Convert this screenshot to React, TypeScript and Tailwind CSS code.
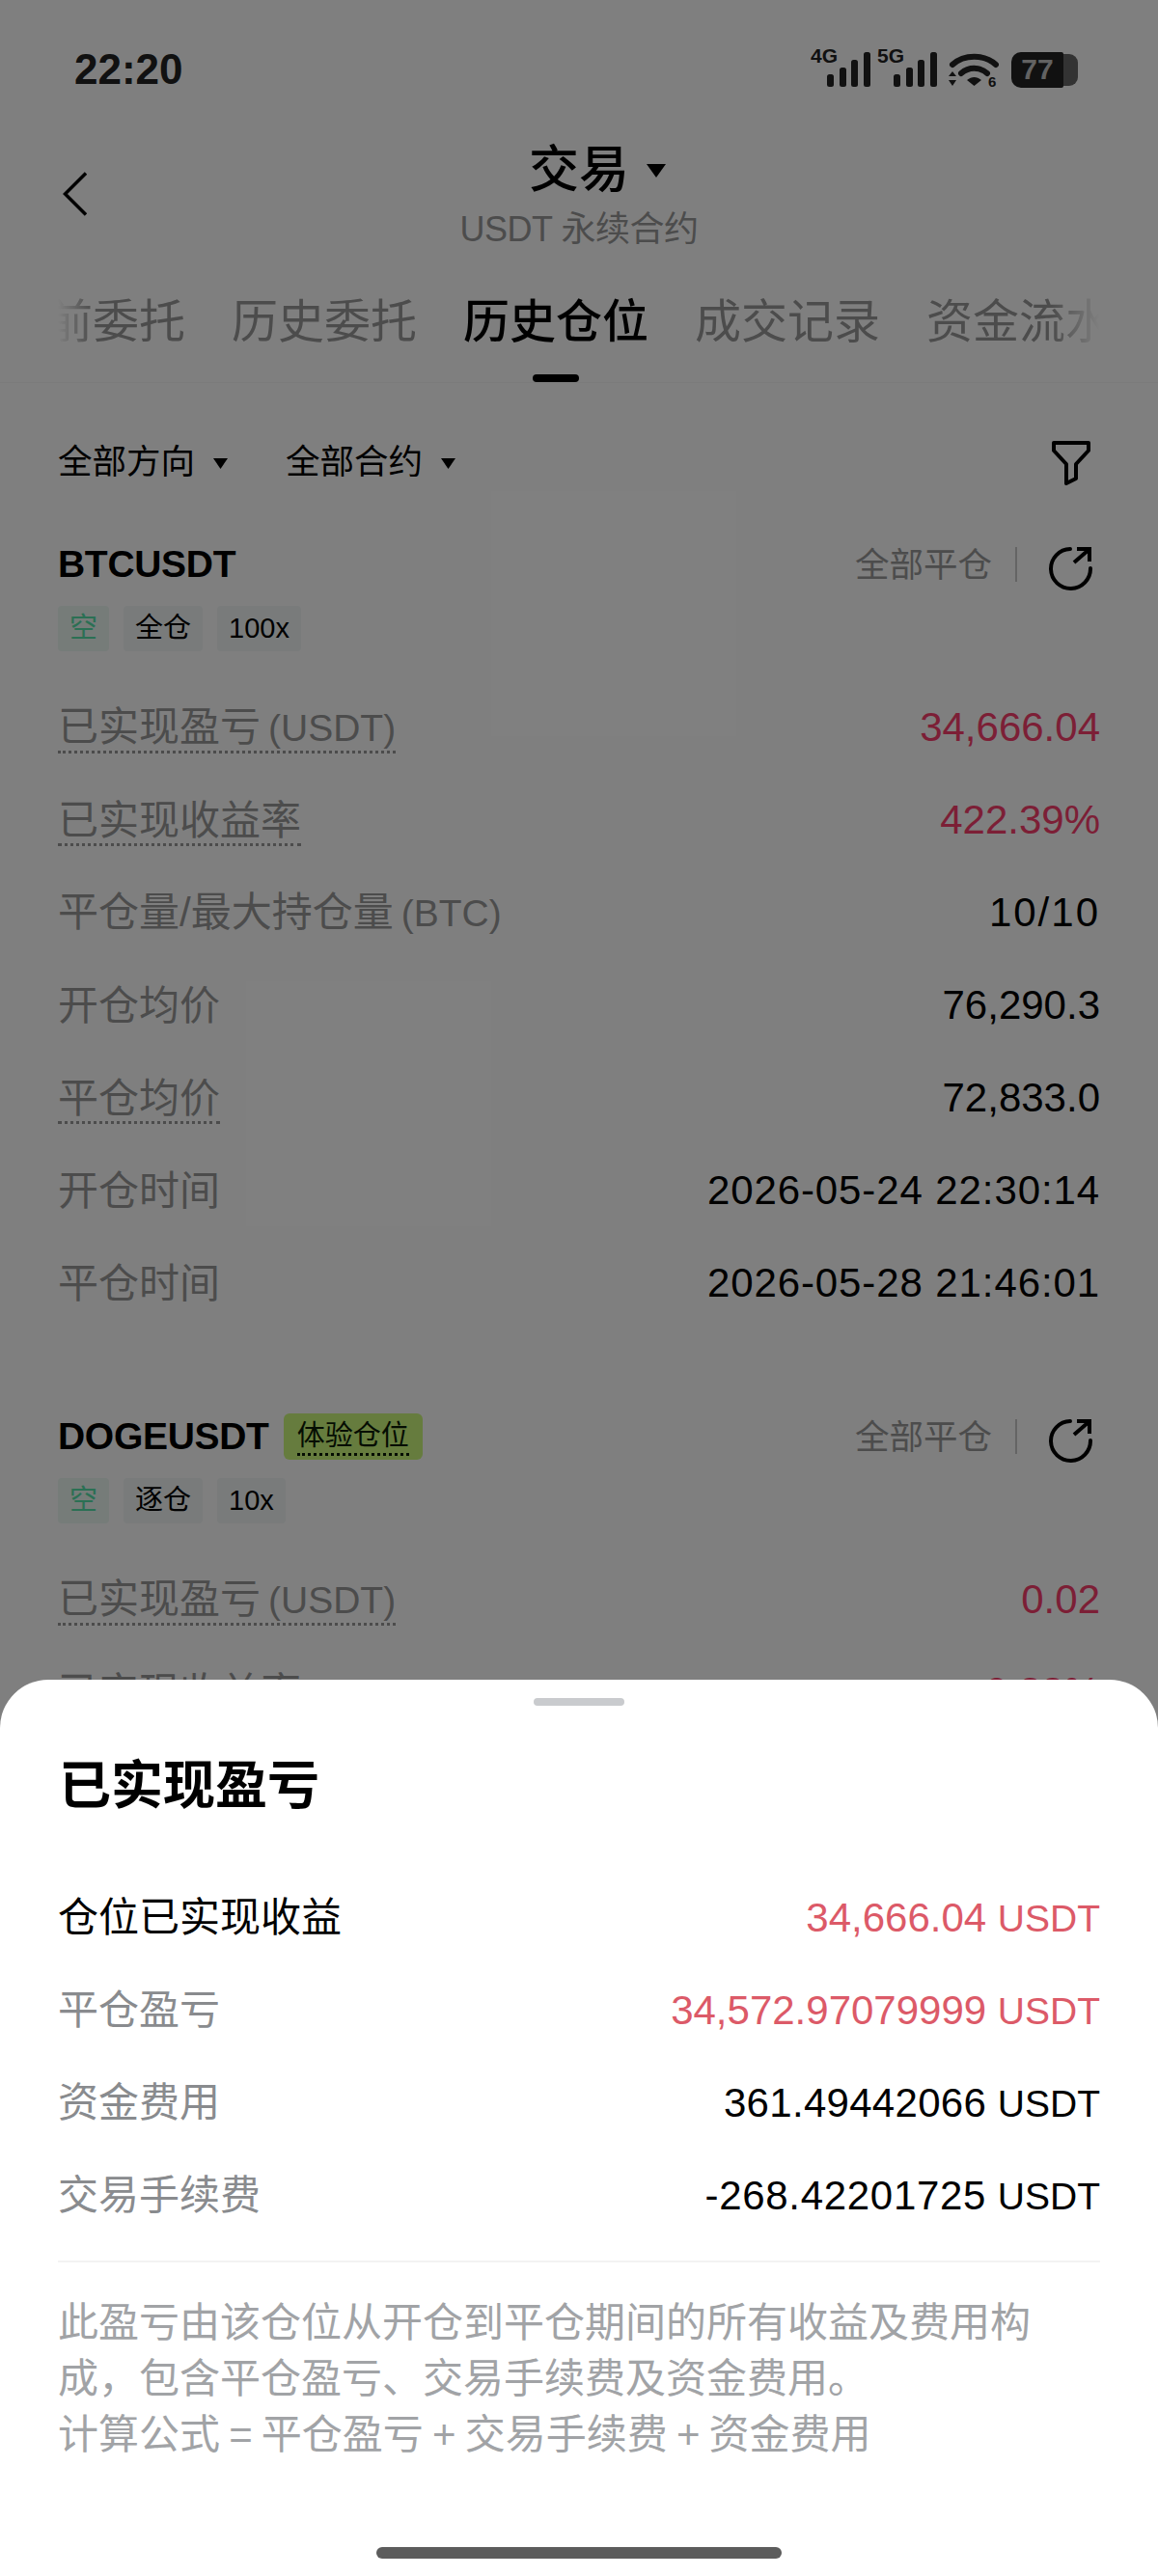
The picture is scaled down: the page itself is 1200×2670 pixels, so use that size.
const font = "font-['Liberation_Sans','Noto_Sans_CJK_SC',sans-serif]"

const positions = [
  {
    symbol: 'BTCUSDT',
    marginMode: '全仓',
    leverage: '100x',
    rows: [
      { label: '已实现盈亏', suffix: '(USDT)', value: '34,666.04', dotted: true, red: true },
      { label: '已实现收益率', value: '422.39%', dotted: true, red: true },
      { label: '平仓量/最大持仓量', suffix: '(BTC)', value: '10/10', wide: 'tracking-[2px]' },
      { label: '开仓均价', value: '76,290.3' },
      { label: '平仓均价', value: '72,833.0', dotted: true },
      { label: '开仓时间', value: '2026-05-24 22:30:14', wide: 'tracking-[0.9px]' },
      { label: '平仓时间', value: '2026-05-28 21:46:01', wide: 'tracking-[0.9px]' },
    ],
  },
  {
    symbol: 'DOGEUSDT',
    trial: true,
    marginMode: '逐仓',
    leverage: '10x',
    rows: [
      { label: '已实现盈亏', suffix: '(USDT)', value: '0.02', dotted: true, red: true },
      { label: '已实现收益率', value: '0.33%', dotted: true, red: true },
    ],
  },
]

const Caret = ({ className }: { className: string }) => (
  <svg viewBox="0 0 16 11" preserveAspectRatio="none" className={className}>
    <path d="M0 0h16L8 11z" fill="#000" />
  </svg>
)

const SignalIcon = ({ label }: { label: string }) => (
  <svg viewBox="0 -8 62 48" className="mb-[12px] h-[48px] w-[62px]">
    <text x="0" y="15" fontSize="21" fontWeight="700" fill="#222" fontFamily="Liberation Sans">
      {label}
    </text>
    <rect x="17" y="27" width="7" height="13" rx="2.500" fill="#222" />
    <rect x="30" y="20" width="7" height="20" rx="2.500" fill="#222" />
    <rect x="42" y="12" width="7" height="28" rx="2.500" fill="#222" />
    <rect x="55" y="4" width="7" height="36" rx="2.500" fill="#222" />
  </svg>
)

const StatusBar = () => (
  <div className="flex h-[144px] items-center justify-between pl-[77px] pr-[83px]">
    <span className="text-[44px] font-bold text-[#222]">22:20</span>
    <div className="flex items-center">
      <SignalIcon label="4G" />
      <div className="ml-[7px] flex">
        <SignalIcon label="5G" />
      </div>
      <svg viewBox="0 0 52 36" className="ml-[12px] mt-[2px] h-[36px] w-[52px]">
        <path d="M4 12C16 1 37 1 49 12" fill="none" stroke="#222" strokeWidth="6" strokeLinecap="round" />
        <path d="M13 21C21 14 32 14 40 21" fill="none" stroke="#222" strokeWidth="6" strokeLinecap="round" />
        <path d="M19 28c5-4 10-4 15 0l-7.500 6z" fill="#222" />
        <path d="M4 19l4 5H0zM0 28h8l-4 6z" fill="#222" />
        <text x="41" y="35" fontSize="15" fontWeight="700" fill="#222" fontFamily="Liberation Sans">
          6
        </text>
      </svg>
      <div className="ml-[13px] flex items-center">
        <div className="flex h-[37px] w-[54px] items-center justify-center rounded-l-[10px] rounded-r-[2px] bg-[#222] text-[30px] font-bold leading-none text-[#c4c4c4]">
          77
        </div>
        <div className="h-[33px] w-[15px] rounded-r-[9px] bg-[#666]" />
      </div>
    </div>
  </div>
)

const Header = () => (
  <div className="grid h-[160px] grid-cols-[1fr_auto_1fr]">
    <div className="pl-[65px] pt-[34px]">
      <svg viewBox="0 0 25 46" className="h-[46px] w-[25px]">
        <path d="M24 1.500 2.500 23 24 44.500" fill="none" stroke="#000" strokeWidth="3.500" />
      </svg>
    </div>
    <div className="flex flex-col items-center">
      <div className="flex items-center">
        <span className="ml-[38px] text-[52px] font-medium leading-[64px] text-black">交易</span>
        <Caret className="ml-[18px] mt-[2px] h-[14px] w-[20px]" />
      </div>
      <span className="mt-[8px] text-[36px] leading-[44px] tracking-[-0.5px] text-[#999]">USDT 永续合约</span>
    </div>
    <div />
  </div>
)

const Tabs = () => (
  <div className="border-b-[1px] border-[#f6f6f6]">
    <div className="ml-[60px] h-[92px] w-[1080px] overflow-hidden [mask-image:linear-gradient(90deg,transparent,#000_36px,#000_1030px,transparent)]">
      <div className="ml-[-60px] flex w-max gap-[48px] text-[48px] leading-[60px] text-[#999]">
        <span>当前委托</span>
        <span>历史委托</span>
        <span className="relative font-medium text-black">
          历史仓位
          <span className="absolute bottom-[-32px] left-[72px] h-[8px] w-[48px] rounded-[4px] bg-black" />
        </span>
        <span>成交记录</span>
        <span>资金流水</span>
      </div>
    </div>
  </div>
)

const Filters = () => (
  <div className="flex h-[100px] items-center px-[60px] pt-[66px] text-[35.5px] text-black">
    <span>全部方向</span>
    <Caret className="ml-[19px] h-[11px] w-[15px]" />
    <span className="ml-[60px]">全部合约</span>
    <Caret className="ml-[19px] h-[11px] w-[15px]" />
    <svg viewBox="0 0 40 46" className="ml-auto mr-[10px] h-[46px] w-[40px]">
      <path d="M2 2h36v8L25 24v15l-10 5V24L2 10z" fill="none" stroke="#000" strokeWidth="4" strokeLinejoin="round" />
    </svg>
  </div>
)

const Tag = ({ children, green }: { children: string; green?: boolean }) => (
  <span
    className={`flex h-[47px] items-center rounded-[4px] px-[12px] text-[29px] ${
      green ? 'bg-[#ecf8f3] text-[#56e0a8]' : 'bg-[#f2f7f7] text-black'
    }`}
  >
    {children}
  </span>
)

type RowProps = { label: string; suffix?: string; value: string; dotted?: boolean; red?: boolean; wide?: string }

const Row = ({ label, suffix, value, dotted, red, wide }: RowProps) => (
  <div className="flex h-[96px] items-center justify-between text-[42px]">
    <span
      className={`pt-[6px] leading-[46px] text-[#999] ${dotted ? 'border-b-[3px] border-dotted border-[#999]' : 'border-b-[3px] border-transparent'}`}
    >
      {label}
      {suffix && <span className="ml-[8px] text-[39px]">{suffix}</span>}
    </span>
    <span className={`${red ? 'text-[#f83e6c]' : 'text-black'} ${wide ?? ''}`}>{value}</span>
  </div>
)

const PositionCard = ({ position }: { position: (typeof positions)[number] }) => (
  <div className="px-[60px] pb-[88px]">
    <div className="flex h-[48px] items-center">
      <span className="text-[39px] font-bold tracking-[-0.3px] text-black">{position.symbol}</span>
      {position.trial && (
        <span className="ml-[15px] flex h-[48px] items-center rounded-[6px] bg-[#cdf87c] px-[14px] text-[29px] text-[#0b1a05]">
          <span className="border-b-[3px] border-dotted border-[#0b1a05] leading-[36px]">体验仓位</span>
        </span>
      )}
      <span className="ml-auto mt-[4px] text-[35.5px] text-[#999]">全部平仓</span>
      <span className="ml-[24px] h-[36px] w-[2px] bg-[#c8c8c8]" />
      <svg viewBox="0 0 46 46" className="ml-[33px] mr-[7px] mt-[8px] h-[46px] w-[46px]">
        <path d="M22 3A20.500 20.500 0 1 0 43 23" fill="none" stroke="#000" strokeWidth="4" strokeLinecap="round" />
        <path d="M26 17 41 4M29 3h13v13" fill="none" stroke="#000" strokeWidth="4" />
      </svg>
    </div>
    <div className="mt-[19px] flex gap-[15px]">
      <Tag green>空</Tag>
      <Tag>{position.marginMode}</Tag>
      <Tag>{position.leverage}</Tag>
    </div>
    <div className="mt-[30px]">
      {position.rows.map((row) => (
        <Row key={row.label} {...row} />
      ))}
    </div>
  </div>
)

const breakdown = [
  { label: '仓位已实现收益', value: '34,666.04', strong: true, red: true },
  { label: '平仓盈亏', value: '34,572.97079999', red: true },
  { label: '资金费用', value: '361.49442066', wide: 'tracking-[0.3px]' },
  { label: '交易手续费', value: '-268.42201725', wide: 'tracking-[0.7px]' },
]

const PnlSheet = () => (
  <div className="absolute inset-x-0 bottom-0 flex h-[929px] flex-col rounded-t-[50px] bg-white">
    <div className="mx-auto mt-[19px] h-[8px] w-[94px] rounded-[4px] bg-[#c9cbce]" />
    <h2 className="mt-[48px] px-[61px] text-[54px] font-semibold leading-[70px] text-black">已实现盈亏</h2>
    <div className="mt-[53px] px-[60px]">
      {breakdown.map((row) => (
        <div key={row.label} className="flex h-[96px] items-center justify-between text-[42px]">
          <span className={row.strong ? 'text-black' : 'text-[#898b8e]'}>{row.label}</span>
          <span className={row.red ? 'text-[#dc5a68]' : 'text-black'}>
            <span className={row.wide}>{row.value}</span> <span className="text-[39px]">USDT</span>
          </span>
        </div>
      ))}
    </div>
    <div className="mx-[60px] mt-[20px] h-[2px] bg-[#f3f3f3]" />
    <p className="px-[60px] pt-[34px] text-[42px] leading-[58px] text-[#a1a3a6]">
      此盈亏由该仓位从开仓到平仓期间的所有收益及费用构成，包含平仓盈亏、交易手续费及资金费用。
      <br />
      <span className="[word-spacing:-2.5px]">计算公式 = 平仓盈亏 + 交易手续费 + 资金费用</span>
    </p>
    <div className="mx-auto mb-[18px] mt-auto h-[12px] w-[420px] rounded-[6px] bg-[#5c5c5c]" />
  </div>
)

export default function App() {
  return (
    <div className={`relative h-[2670px] w-[1200px] overflow-hidden bg-white ${font}`}>
      <StatusBar />
      <Header />
      <Tabs />
      <Filters />
      <div className="pt-[64px]">
        {positions.map((position) => (
          <PositionCard key={position.symbol} position={position} />
        ))}
      </div>
      <div className="absolute inset-0 bg-black/50" />
      <PnlSheet />
    </div>
  )
}
